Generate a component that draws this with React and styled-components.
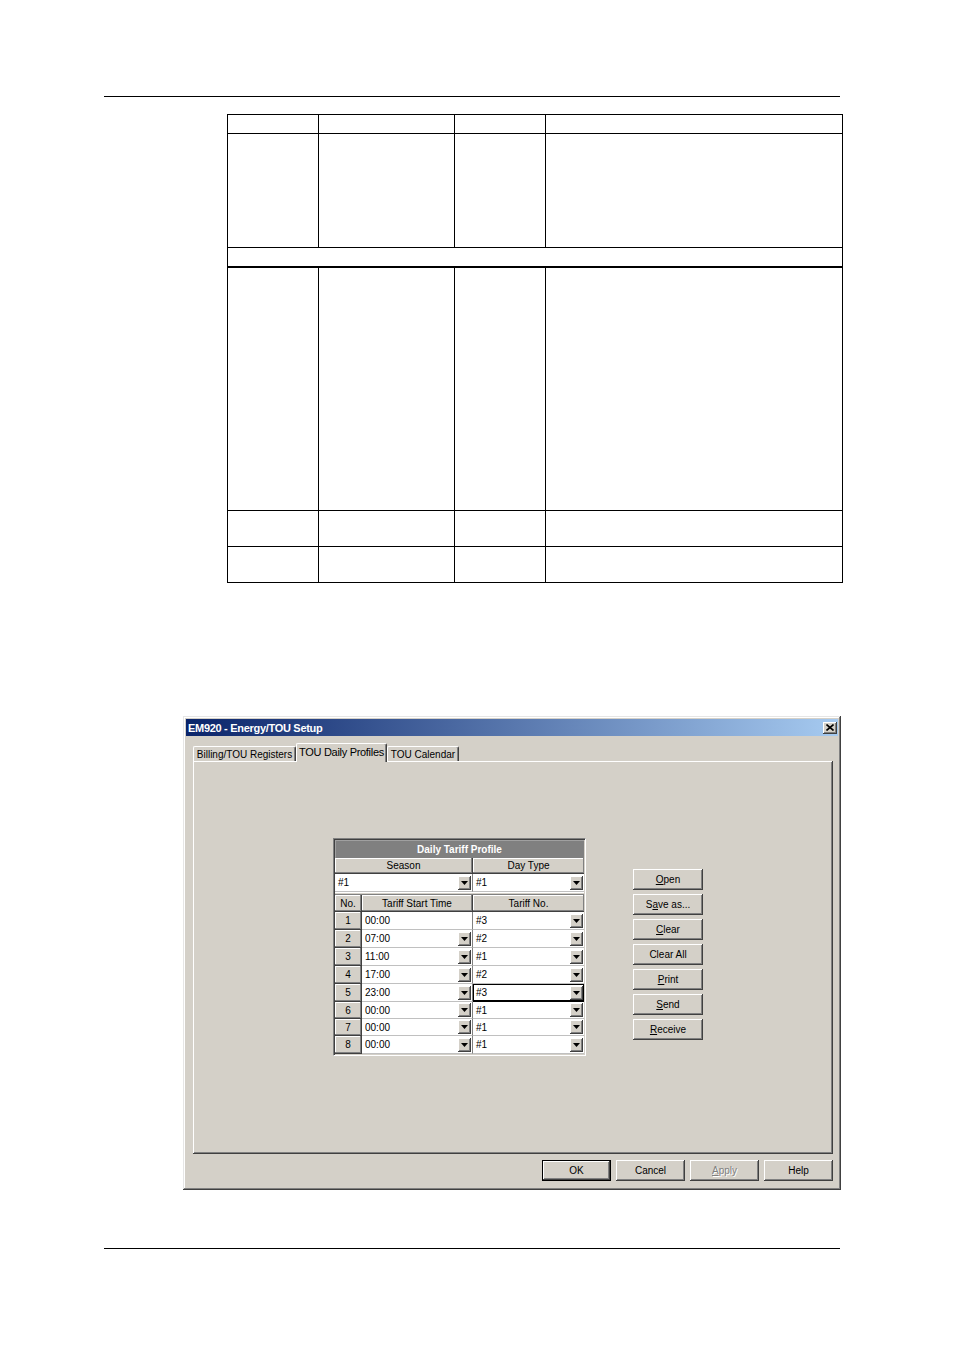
import React from "react";
import styled, { createGlobalStyle, css } from "styled-components";

const GlobalStyle = createGlobalStyle`
  html, body { margin: 0; padding: 0; background: #ffffff; }
  body { font-family: "Liberation Sans", Arial, sans-serif; }
`;

const uiFont = `"Liberation Sans", Arial, sans-serif`;

const raised = css`
  box-shadow: inset -1px -1px #404040, inset 1px 1px #ffffff, inset -2px -2px #808080, inset 2px 2px #d4d0c8;
`;

const Page = styled.div`
  width: 954px;
  min-height: 1351px;
  padding-top: 96px;
  box-sizing: border-box;
`;

const Rule = styled.div`
  margin-left: 104px;
  width: 736px;
  height: 0;
  border-top: 1px solid #000;
  margin-top: ${(p) => p.$top || 0}px;
`;

const DocTable = styled.table`
  margin: 17px 0 0 227px;
  width: 615px;
  border-collapse: collapse;
  table-layout: fixed;
`;

const Td = styled.td`
  border: 1px solid #000;
  border-top-color: ${(p) => (p.$soft ? "#808080" : "#000")};
  border-bottom-width: ${(p) => (p.$thick ? 2 : 1)}px;
  padding: 0;
`;

const Tr = styled.tr`
  height: ${(p) => p.$h}px;
`;

const Dialog = styled.div`
  margin: 133px 0 0 183px;
  width: 658px;
  height: 474px;
  box-sizing: border-box;
  padding: 3px;
  background: #d4d0c8;
  box-shadow: inset -1px -1px #404040, inset 1px 1px #e6e6e6, inset -2px -2px #808080, inset 2px 2px #ffffff;
  display: flex;
  flex-direction: column;
  font-family: ${uiFont};
  font-size: 10px;
  color: #000;
`;

const TitleBar = styled.div`
  height: 17px;
  display: flex;
  align-items: center;
  justify-content: space-between;
  padding: 0 1px 0 2px;
  background: linear-gradient(to right, #0a246a, #a6caf0);
  color: #fff;
  font-weight: bold;
  font-size: 11px;
  letter-spacing: -0.3px;
`;

const CloseBtn = styled.div`
  width: 14px;
  height: 12px;
  background: #d4d0c8;
  ${raised};
  display: flex;
  align-items: center;
  justify-content: center;
`;

const Body = styled.div`
  padding: 7px 5px 0 7px;
  display: flex;
  flex-direction: column;
`;

const TabStrip = styled.div`
  height: 18px;
  display: flex;
  align-items: flex-end;
`;

const Tab = styled.div`
  width: ${(p) => p.$w}px;
  height: ${(p) => (p.$active ? 19 : 15)}px;
  margin-bottom: ${(p) => (p.$active ? -1 : 0)}px;
  position: relative;
  z-index: ${(p) => (p.$active ? 1 : 0)};
  box-sizing: border-box;
  background: #d4d0c8;
  border-top: 1px solid #ffffff;
  border-left: 1px solid #ffffff;
  border-right: 1px solid #404040;
  box-shadow: inset -1px 0 #808080;
  border-radius: 2px 2px 0 0;
  display: flex;
  align-items: ${(p) => (p.$active ? "flex-start" : "center")};
  padding-top: ${(p) => (p.$active ? 2 : 0)}px;
  justify-content: center;
  white-space: nowrap;
  font-size: ${(p) => (p.$active ? 11 : 10)}px;
  letter-spacing: ${(p) => (p.$active ? -0.3 : 0)}px;
`;

const Panel = styled.div`
  height: 393px;
  box-sizing: border-box;
  box-shadow: inset -1px -1px #404040, inset 1px 1px #ffffff, inset -2px -2px #808080;
  display: flex;
  align-items: flex-start;
  gap: 47px;
  padding: 77px 0 0 140px;
`;

const GridBox = styled.div`
  width: 253px;
  box-sizing: border-box;
  border: 1px solid;
  border-color: #808080 #ffffff #ffffff #808080;
  padding: 1px;
  box-shadow: inset 1px 1px #404040, inset -1px -1px #d4d0c8;
  display: flex;
  flex-direction: column;
`;

const Caption = styled.div`
  height: 18px;
  background: #808080;
  color: #fff;
  font-weight: bold;
  display: flex;
  align-items: center;
  justify-content: center;
  box-shadow: inset 1px 1px #a0a0a0;
`;

const Row = styled.div`
  display: flex;
  height: ${(p) => p.$h}px;
`;

const HeadCell = styled.div`
  width: ${(p) => p.$w}px;
  box-sizing: border-box;
  background: #d4d0c8;
  box-shadow: inset -1px -1px #808080, inset 1px 1px #ffffff;
  border-right: ${(p) => (p.$last ? 0 : 1)}px solid #404040;
  border-bottom: 1px solid #404040;
  display: flex;
  align-items: center;
  justify-content: center;
`;

const DataCell = styled.div`
  width: ${(p) => p.$w}px;
  box-sizing: border-box;
  background: #fff;
  border-right: ${(p) => (p.$last ? 0 : 1)}px solid #808080;
  border-bottom: 1px solid #c0c0c0;
  display: flex;
  align-items: center;
  justify-content: space-between;
  padding-left: 3px;
  ${(p) =>
    p.$focus &&
    css`
      box-shadow: inset 1px 1px #000, inset -1px -1px #000;
      border-bottom-color: #000;
    `}
`;

const Gap = styled.div`
  height: 3px;
  background: #d4d0c8;
  box-shadow: inset 0 -1px #808080, inset 0 1px #ffffff;
`;

const DropBtn = styled.div`
  width: 13px;
  height: 14px;
  margin-right: 1px;
  flex-shrink: 0;
  background: #d4d0c8;
  ${raised};
  display: flex;
  align-items: center;
  justify-content: center;
`;

const SideButtons = styled.div`
  margin-top: 31px;
  display: flex;
  flex-direction: column;
  gap: 4px;
`;

const WinButton = styled.button`
  width: ${(p) => p.$w}px;
  height: 21px;
  padding: 0;
  border: 0;
  background: #d4d0c8;
  font-family: inherit;
  font-size: 10px;
  color: #000;
  ${raised};
  ${(p) =>
    p.$default &&
    css`
      box-shadow: inset 0 0 0 1px #000, inset -2px -2px #404040, inset 2px 2px #ffffff, inset -3px -3px #808080;
    `}
  &:disabled {
    color: #808080;
    text-shadow: 1px 1px #ffffff;
  }
`;

const Footer = styled.div`
  display: flex;
  justify-content: flex-end;
  gap: 5px;
  margin-top: 6px;
`;

const Arrow = () => (
  <svg width="7" height="4" viewBox="0 0 7 4">
    <polygon points="0,0 7,0 3.5,4" fill="#000" />
  </svg>
);

const Combo = ({ w, text, drop = true, last, focus }) => (
  <DataCell $w={w} $last={last} $focus={focus}>
    <span>{text}</span>
    {drop && <DropBtn><Arrow /></DropBtn>}
  </DataCell>
);

const rows = [
  { n: 1, time: "00:00", timeDrop: false, tariff: "#3", h: 18 },
  { n: 2, time: "07:00", tariff: "#2", h: 18 },
  { n: 3, time: "11:00", tariff: "#1", h: 18 },
  { n: 4, time: "17:00", tariff: "#2", h: 18 },
  { n: 5, time: "23:00", tariff: "#3", focus: true, h: 18 },
  { n: 6, time: "00:00", tariff: "#1", h: 17 },
  { n: 7, time: "00:00", tariff: "#1", h: 17 },
  { n: 8, time: "00:00", tariff: "#1", h: 18 },
];

const docRows = [
  { h: 19 },
  { h: 114 },
  { h: 19, full: true },
  { h: 244 },
  { h: 36, soft: true },
  { h: 36, soft: true },
];

export default function App() {
  return (
    <Page>
      <GlobalStyle />
      <Rule />
      <DocTable>
        <colgroup>
          <col style={{ width: 91 }} />
          <col style={{ width: 136 }} />
          <col style={{ width: 91 }} />
          <col style={{ width: 297 }} />
        </colgroup>
        <tbody>
          {docRows.map((r, i) => (
            <Tr key={i} $h={r.h}>
              {r.full ? (
                <Td colSpan={4} $thick />
              ) : (
                [0, 1, 2, 3].map((c) => <Td key={c} $soft={r.soft} />)
              )}
            </Tr>
          ))}
        </tbody>
      </DocTable>

      <Dialog>
        <TitleBar>
          <span>EM920 - Energy/TOU Setup</span>
          <CloseBtn>
            <svg width="8" height="7" viewBox="0 0 8 7">
              <path d="M0.5 0.5 L7.5 6.5 M7.5 0.5 L0.5 6.5" stroke="#000" strokeWidth="1.6" />
            </svg>
          </CloseBtn>
        </TitleBar>
        <Body>
          <TabStrip>
            <Tab $w={103}>Billing/TOU Registers</Tab>
            <Tab $w={91} $active>TOU Daily Profiles</Tab>
            <Tab $w={72}>TOU Calendar</Tab>
          </TabStrip>
          <Panel>
            <GridBox>
              <Caption>Daily Tariff Profile</Caption>
              <Row $h={16}>
                <HeadCell $w={138}>Season</HeadCell>
                <HeadCell $w={111} $last>Day Type</HeadCell>
              </Row>
              <Row $h={18}>
                <Combo w={138} text="#1" />
                <Combo w={111} text="#1" last />
              </Row>
              <Gap />
              <Row $h={17}>
                <HeadCell $w={27}>No.</HeadCell>
                <HeadCell $w={111}>Tariff Start Time</HeadCell>
                <HeadCell $w={111} $last>Tariff No.</HeadCell>
              </Row>
              {rows.map((r) => (
                <Row key={r.n} $h={r.h}>
                  <HeadCell $w={27}>{r.n}</HeadCell>
                  <Combo w={111} text={r.time} drop={r.timeDrop !== false} />
                  <Combo w={111} text={r.tariff} last focus={r.focus} />
                </Row>
              ))}
            </GridBox>
            <SideButtons>
              <WinButton $w={70}><u>O</u>pen</WinButton>
              <WinButton $w={70}>S<u>a</u>ve as...</WinButton>
              <WinButton $w={70}><u>C</u>lear</WinButton>
              <WinButton $w={70}>Clear All</WinButton>
              <WinButton $w={70}><u>P</u>rint</WinButton>
              <WinButton $w={70}><u>S</u>end</WinButton>
              <WinButton $w={70}><u>R</u>eceive</WinButton>
            </SideButtons>
          </Panel>
          <Footer>
            <WinButton $w={69} $default>OK</WinButton>
            <WinButton $w={69}>Cancel</WinButton>
            <WinButton $w={69} disabled><u>A</u>pply</WinButton>
            <WinButton $w={69}>Help</WinButton>
          </Footer>
        </Body>
      </Dialog>
      <Rule $top={58} />
    </Page>
  );
}
